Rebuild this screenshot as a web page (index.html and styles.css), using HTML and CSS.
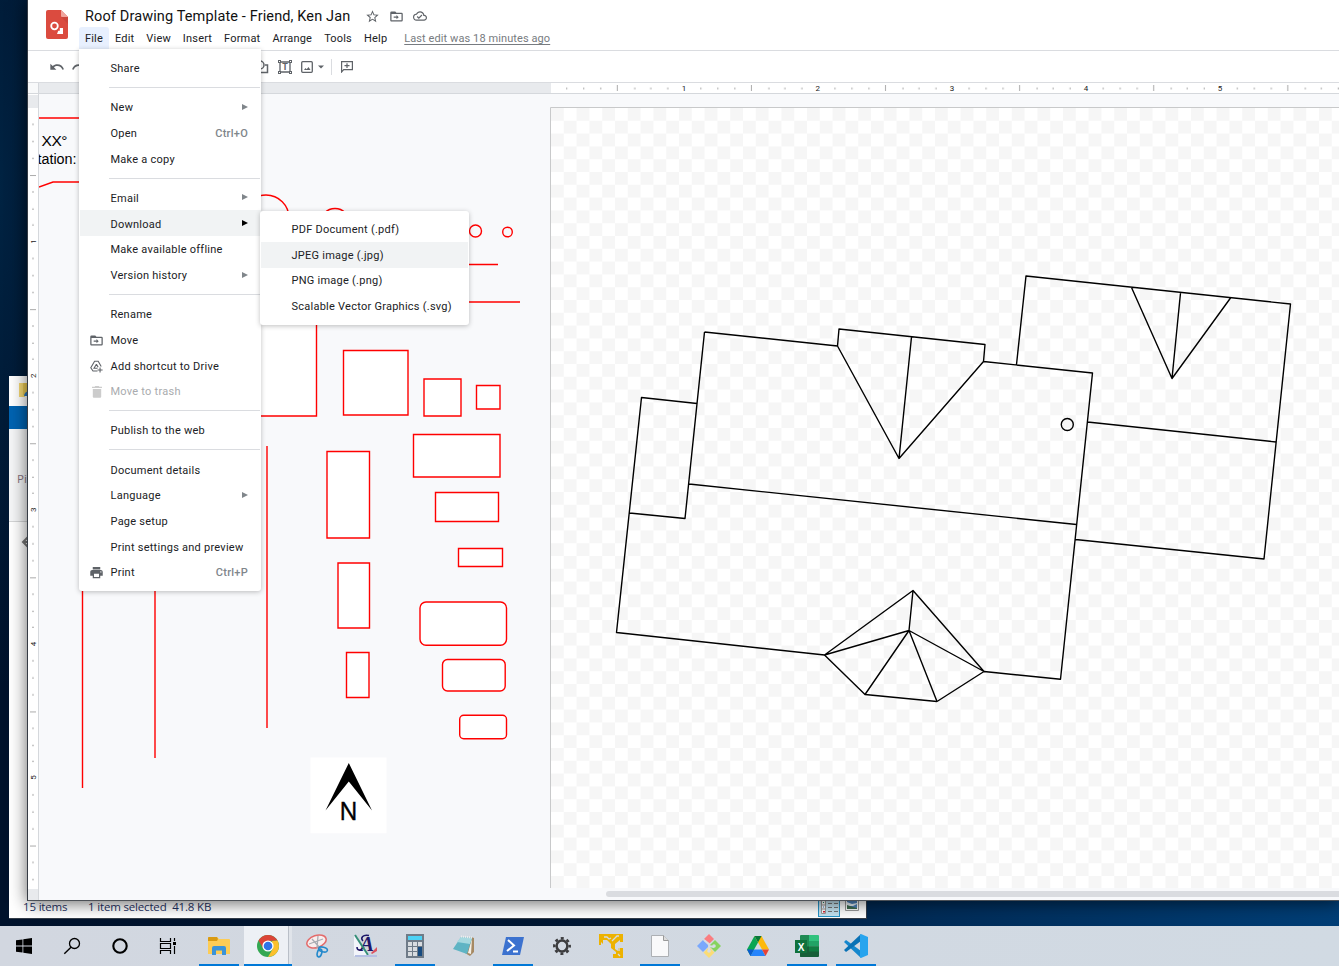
FILE: index.html
```html
<!DOCTYPE html>
<html lang="en">
<head>
<meta charset="utf-8">
<title>Roof Drawing Template - Friend, Ken Jan</title>
<link rel="stylesheet" href="styles.css">
</head>
<body>
<div class="desktop">

  <section class="explorer">
    <div class="ex-title">
      <svg width="18" height="18" viewBox="0 0 18 18"><path d="M0 1h6v14H0z" fill="#f5d873"/><path d="M4 1h14v12H4z" fill="#e9c852"/><path d="M5 14c1-5 4-5 8-5v5z" fill="#2b78c2"/></svg>
    </div>
    <div class="ex-tab"></div>
    <div class="ex-ribbon"><span>Pin</span></div>
    <div class="ex-body">
      <svg width="14" height="12" viewBox="0 0 14 12"><path d="M7 1L2 6l5 5M2 6h12" fill="none" stroke="#777" stroke-width="2"/></svg>
    </div>
    <div class="ex-status">
      <span class="ex-count">15 items</span><span class="ex-sel">1 item selected&nbsp; 41.8 KB</span>
      <div class="ex-views">
        <div class="view-on"><svg width="20" height="16" viewBox="0 0 20 16"><path d="M2.500 0v13.500h4V0M2.500 5h4M2.500 9h4" fill="#fff" stroke="#999"/><path d="M9 3.500h4M15 3.500h4M9 7.500h4M15 7.500h4M9 11.500h4M15 11.500h4" stroke="#777"/><path d="M4 2h1v1H4z" fill="#286"/><path d="M4 6.500h1v1H4z" fill="#37c"/><path d="M4 11h2v1.500H4z" fill="#d23"/></svg></div>
        <div class="view-off"><svg width="14" height="12" viewBox="0 0 14 12"><path d="M.5 0v10.500h13V0" fill="#fff" stroke="#999"/><path d="M2 1h10v8H2z" fill="#4f83bd"/><path d="M2 2l5 2 5-1v1L8 6H2z" fill="#eaf3fb"/><path d="M2 5l6 2 4 1v1H2z" fill="#3f6d50"/></svg></div>
      </div>
    </div>
  </section>

  <main class="window">
    <header class="head">
      <svg class="logo" width="22" height="30" viewBox="0 0 22 30"><path d="M2 0h13l7 7v20a2 2 0 0 1-2 2H2a2 2 0 0 1-2-2V2a2 2 0 0 1 2-2z" fill="#db4b3f"/><path d="M15 0l7 7h-6a1 1 0 0 1-1-1z" fill="#f0a59d"/><path d="M15 7h7v7z" fill="#bd4037" opacity=".5"/><circle cx="8.500" cy="16" r="3.300" fill="none" stroke="#fff" stroke-width="1.800"/><path d="M17 18v6h-6l1.200-3.200h1.600V18z" fill="#fff"/></svg>
      <div class="head-text">
        <div class="title-row">
          <h1>Roof Drawing Template - Friend, Ken Jan</h1>
          <svg class="ic" width="15" height="15" viewBox="0 0 24 24"><path d="M22 9.240l-7.190-.62L12 2 9.190 8.630 2 9.240l5.460 4.730L5.820 21 12 17.270 18.180 21l-1.630-7.030L22 9.240zM12 15.400l-3.760 2.270 1-4.280-3.320-2.880 4.380-.38L12 6.100l1.710 4.040 4.380.38-3.320 2.880 1 4.280L12 15.400z"/></svg>
          <svg class="ic" width="15" height="15" viewBox="0 0 24 24"><path d="M20 6h-8l-2-2H4a2 2 0 0 0-2 2v12c0 1.100.9 2 2 2h16a2 2 0 0 0 2-2V8a2 2 0 0 0-2-2zm0 12H4V8h16zM12 9.500V12H7.500v2H12v2.500l3.500-3.500z"/></svg>
          <svg class="ic" width="14" height="14" viewBox="0 0 24 24"><path d="M19.350 10.040A7.490 7.490 0 0 0 12 4C9.110 4 6.600 5.640 5.350 8.040A5.994 5.994 0 0 0 0 14c0 3.310 2.690 6 6 6h13c2.760 0 5-2.240 5-5 0-2.640-2.050-4.780-4.650-4.960zM19 18H6c-2.210 0-4-1.790-4-4 0-2.050 1.530-3.760 3.560-3.970l1.070-.11.5-.95A5.469 5.469 0 0 1 12 6c2.620 0 4.880 1.860 5.390 4.430l.3 1.500 1.530.11A2.980 2.980 0 0 1 22 15c0 1.650-1.350 3-3 3zm-9-3.820l-2.090-2.090L6.500 13.500 10 17l6.010-6.010-1.410-1.410z"/></svg>
        </div>
        <nav class="menubar">
          <span class="open">File</span><span>Edit</span><span>View</span><span>Insert</span><span>Format</span><span>Arrange</span><span>Tools</span><span>Help</span><a>Last edit was 18 minutes ago</a>
        </nav>
      </div>
    </header>

    <div class="toolbar">
      <svg width="16" height="16" viewBox="0 0 24 24"><path d="M12.500 8c-2.650 0-5.050.99-6.900 2.600L2 7v9h9l-3.620-3.620c1.390-1.160 3.160-1.880 5.120-1.880 3.540 0 6.550 2.310 7.600 5.500l2.370-.78C21.080 11.030 17.150 8 12.500 8z"/></svg>
      <svg width="16" height="16" viewBox="0 0 24 24"><path d="M18.400 10.600C16.550 8.990 14.150 8 11.500 8c-4.650 0-8.580 3.030-9.960 7.220L3.900 16a8 8 0 0 1 12.720-3.620L13 16h9V7z"/></svg>
      <svg class="t-shape" width="16" height="16" viewBox="0 0 16 16"><circle cx="6" cy="6" r="4" fill="none" stroke="#5f6368" stroke-width="1.500"/><path d="M11 6h2.500v7.500H6V11" fill="none" stroke="#5f6368" stroke-width="1.500"/></svg>
      <svg class="t-box" width="14" height="14" viewBox="0 0 14 14"><path d="M2 2h10v10H2z" fill="none" stroke="#5f6368" stroke-width="1.300"/><path d="M0 0h3v3H0zM11 0h3v3h-3zM0 11h3v3H0zM11 11h3v3h-3z"/><path d="M1 1h1v1H1zM12 1h1v1h-1zM1 12h1v1H1zM12 12h1v1h-1z" fill="#fff"/><text x="7" y="10.300">T</text></svg>
      <svg class="t-img" width="12" height="12" viewBox="0 0 12 12"><rect x=".7" y=".7" width="10.600" height="10.600" rx="1" fill="none" stroke="#5f6368" stroke-width="1.300"/><path d="M3 9l1.500-2 1.200 1.200L7.500 6 9.500 9z"/></svg>
      <svg class="t-caret" width="6" height="4" viewBox="0 0 6 4"><path d="M0 .5h6l-3 3z"/></svg>
      <i class="t-div"></i>
      <svg class="t-com" width="12" height="12" viewBox="0 0 12 12"><path d="M.6 11V.7h10.800v8H2.700z" fill="none" stroke="#5f6368" stroke-width="1.200"/><path d="M5.400 2.300h1.200v1.800h1.900v1.200H6.600v1.800H5.400V5.300H3.500V4.100h1.900z"/></svg>
    </div>

    <svg class="hruler" width="1311" height="11" viewBox="28 83 1311 11">
      <defs>
        <pattern id="hticks" x="550.300" y="83" width="134.100" height="10" patternUnits="userSpaceOnUse">
          <path d="M16 4.500h1v2h-1zM33 4.500h1v2h-1zM50 4.500h1v2h-1zM66.500 2h1v6h-1zM84 4.500h1v2h-1zM100 4.500h1v2h-1zM117 4.500h1v2h-1z" fill="#aaa"/>
        </pattern>
        <pattern id="vticks" x="28" y="107.500" width="10" height="134.100" patternUnits="userSpaceOnUse">
          <path d="M4 16.500h2v1H4zM4 33.500h2v1H4zM4 50.500h2v1H4zM2 67.500h6v1H2zM4 84h2v1H4zM4 101h2v1H4zM4 117h2v1H4z" fill="#aaa"/>
        </pattern>
      </defs>
      <path d="M28 83h11v11H28z" fill="#f8f9fa"/><path d="M39 83h512v10H39z" fill="#e8eaed"/>
      <path d="M551 83h788v10H551z" fill="#fff"/><path d="M551 83h788v10H551z" fill="url(#hticks)"/>
      <path d="M28 93.500h1311" stroke="#d5d8dc"/><path d="M38.500 83v11" stroke="#d5d8dc"/>
      <g class="rl"><text x="684" y="91">1</text><text x="817.800" y="91">2</text><text x="952" y="91">3</text><text x="1086" y="91">4</text><text x="1220" y="91">5</text></g>
    </svg>

    <div class="work">
      <svg class="vruler" width="11" height="806" viewBox="28 94 11 806">
        <path d="M28 94h10v806H28z" fill="#fff"/><path d="M28 95h10v13H28zM28 889h10v11H28z" fill="#e8eaed"/>
        <path d="M28 108h10v781H28z" fill="url(#vticks)"/><path d="M38.500 94v806" stroke="#d5d8dc"/>
        <g class="rl"><text transform="translate(36 241.600) rotate(-90)">1</text><text transform="translate(36 375.700) rotate(-90)">2</text><text transform="translate(36 509.800) rotate(-90)">3</text><text transform="translate(36 643.900) rotate(-90)">4</text><text transform="translate(36 777.500) rotate(-90)">5</text></g>
      </svg>
      <svg class="canvas" width="1300" height="806" viewBox="39 94 1300 806">
        <defs><pattern id="chk" x="551" y="108" width="25.600" height="25.600" patternUnits="userSpaceOnUse"><path d="M0 0h12.800v12.800H0zM12.800 12.800h12.800v12.800H12.800z" fill="#f6f6f6"/></pattern></defs>
        <path d="M551 108h788v780H551z" fill="#fff"/><path d="M551 108h788v780H551z" fill="url(#chk)"/>
        <path d="M550.500 888V107.500H1339" fill="none" stroke="#c8c9ca"/>
        <g class="note"><text x="41.500" y="146" textLength="26">XX°</text><text x="37.500" y="164" textLength="39" lengthAdjust="spacingAndGlyphs">tation:</text></g>
        <g class="red">
          <path d="M39 118H90M39 187l14-5H90M440 264.500h58M440 302h80M82.500 580v208M155 580v178M267 446v282"/>
          <circle cx="266" cy="218" r="23"/><circle cx="335" cy="223" r="14.500"/><circle cx="475.500" cy="231" r="6"/><circle cx="507.500" cy="232" r="4.800"/>
          <path d="M230 310h86.500v106H230zM343.500 350.500h64.500v64.500h-64.500zM424 379h37v37h-37zM476.500 385.500H500V409h-23.500zM413.500 434.500H500V477h-86.500zM435.500 492.500h63v29h-63zM458.500 548.500h44v18h-44zM327 451.500h42.500V538H327zM338 563h31.500v65H338zM346.500 652.500H369v45h-22.500z"/>
          <rect x="420" y="602" width="86.500" height="43.300" rx="6"/><rect x="442.500" y="659.500" width="62.700" height="31.500" rx="5"/><rect x="459.700" y="715.300" width="46.800" height="23.500" rx="4"/>
        </g>
        <path d="M310.500 757.500h76v75.700h-76z" fill="#fff"/><path d="M348.800 763L372 810.500 348.800 781.500 325.500 810.500z"/>
        <text class="north" x="339.500" y="820" textLength="18" lengthAdjust="spacingAndGlyphs">N</text>
        <g class="roof">
          <path d="M704.500 332l133 14 1.500-17 146 15.500-1.500 17 109 11.500L1060.500 679.300 984 671.500M937 701.500L865 694.500 824.500 655 616.500 632.500 641.500 397.500 697 403.500M984 671.500l-47 30M704.500 332L685 518.500 629.500 513M689 484l387.500 40.500M837.500 346L899 458.500l84.500-97M911.500 337L899 458.500M1016.500 364.500L1026 276l264.500 28L1264 559l-188.500-19.500M1087.500 422l188.500 20M1131.500 287.500L1172 378.500 1230.500 298M1180.500 293L1172 378.500"/>
          <path d="M824.500 655L913 590.500 984 671.500M913 590.500l-4 40M824.500 655l84.500-24.500 75 41M865 694.500l44-64 28 71"/>
          <circle cx="1067.300" cy="424.500" r="6"/>
        </g>
        <path d="M606 894a3 3 0 0 1 3-3H1339v6H609a3 3 0 0 1-3-3z" fill="#dadce0"/>
      </svg>
    </div>
  </main>

  <div class="menu file-menu">
    <div class="mi"><b></b>Share</div><hr>
    <div class="mi"><b></b>New<u></u></div>
    <div class="mi"><b></b>Open<em>Ctrl+O</em></div>
    <div class="mi"><b></b>Make a copy</div><hr>
    <div class="mi"><b></b>Email<u></u></div>
    <div class="mi on"><b></b>Download<u></u></div>
    <div class="mi"><b></b>Make available offline</div>
    <div class="mi"><b></b>Version history<u></u></div><hr>
    <div class="mi"><b></b>Rename</div>
    <div class="mi"><b><svg width="15" height="15" viewBox="0 0 24 24"><path d="M20 6h-8l-2-2H4a2 2 0 0 0-2 2v12c0 1.100.9 2 2 2h16a2 2 0 0 0 2-2V8a2 2 0 0 0-2-2zm0 12H4V8h16zM12 9.500V12H7.500v2H12v2.500l3.500-3.500z"/></svg></b>Move</div>
    <div class="mi"><b><svg width="13" height="13" viewBox="0 0 13 13"><path d="M7.500 11H3L.8 7.700 4.600 1.200h3.600l3 5.200M6.400 4.200L4 8.300h3.500M6.400 4.200l1.700 2.900" fill="none" stroke="#5f6368" stroke-width="1.100"/><path d="M9.500 7.500h1.100v2h2v1.100h-2v2H9.500v-2h-2V9.500h2z"/></svg></b>Add shortcut to Drive</div>
    <div class="mi off"><b><svg width="10" height="12" viewBox="0 0 10 12"><path d="M3.200 0h3.600l.5.800H10V2H0V.8h2.700zM.8 3h8.400v7.800a1 1 0 0 1-1 1H1.800a1 1 0 0 1-1-1z"/></svg></b>Move to trash</div><hr>
    <div class="mi"><b></b>Publish to the web</div><hr>
    <div class="mi"><b></b>Document details</div>
    <div class="mi"><b></b>Language<u></u></div>
    <div class="mi"><b></b>Page setup</div>
    <div class="mi"><b></b>Print settings and preview</div>
    <div class="mi"><b><svg width="15" height="15" viewBox="0 0 24 24"><path d="M19 8H5c-1.660 0-3 1.340-3 3v6h4v4h12v-4h4v-6c0-1.660-1.340-3-3-3zm-3 11H8v-5h8v5zm3-7a1 1 0 1 1 0-2 1 1 0 0 1 0 2zM18 3H6v4h12z"/></svg></b>Print<em>Ctrl+P</em></div>
  </div>
  <div class="menu sub-menu">
    <div class="mi">PDF Document (.pdf)</div>
    <div class="mi on">JPEG image (.jpg)</div>
    <div class="mi">PNG image (.png)</div>
    <div class="mi">Scalable Vector Graphics (.svg)</div>
  </div>

  <footer class="taskbar">
    <div class="sys"><svg width="16" height="16" viewBox="0 0 16 16"><path d="M0 2.300L6.500 1.400V7.600H0zM7.300 1.300L16 0v7.600H7.300zM0 8.400h6.500v6.200L0 13.700zM7.300 8.400H16V16l-8.700-1.200z"/></svg></div>
    <div class="sys"><svg width="18" height="18" viewBox="0 0 18 18"><circle cx="11.500" cy="6.500" r="5" fill="none" stroke="#000" stroke-width="1.300"/><path d="M8 10.200L1.300 16.800" stroke="#000" stroke-width="1.400"/></svg></div>
    <div class="sys"><svg width="18" height="18" viewBox="0 0 18 18"><circle cx="9" cy="9" r="6.700" fill="none" stroke="#000" stroke-width="2.100"/></svg></div>
    <div class="sys"><svg width="18" height="16" viewBox="0 0 18 16"><path d="M1.500 0v3.500h10V0M1.500 5.500h10v5h-10zM1.500 16v-3.500h10V16M15.500 0v3M15.500 8v8" fill="none" stroke="#000" stroke-width="1.200"/><path d="M14 4h3v3h-3z"/></svg></div>
    <div class="app run"><svg width="24" height="20" viewBox="0 0 24 20"><path d="M1 2a1 1 0 0 1 1-1h8l2 2h10a1 1 0 0 1 1 1v14H1z" fill="#fdcc55"/><path d="M1 5V2a1 1 0 0 1 1-1h8l1 2-1 2z" fill="#d99a12"/><path d="M5 19v-7a2 2 0 0 1 2-2h10a2 2 0 0 1 2 2v7h-4v-4.500H9V19z" fill="#3b93d8"/></svg></div>
    <div class="app run active"><svg width="22" height="22" viewBox="0 0 22 22"><circle cx="11" cy="11" r="11" fill="#34a853"/><path d="M1.500 5.500A11 11 0 0 1 20.500 5.500L11 6v5l-4.500 3z" fill="#db4437"/><path d="M20.500 5.500A11 11 0 0 1 11 22l5-8.500L15 6z" fill="#fbc02d"/><circle cx="11" cy="11" r="5.600" fill="#fff"/><circle cx="11" cy="11" r="4.300" fill="#2f74e8"/></svg></div>
    <div class="app"><svg width="24" height="24" viewBox="0 0 24 24"><ellipse cx="11.500" cy="7.500" rx="10" ry="6" transform="rotate(-18 11.500 7.500)" fill="#f8eeee" stroke="#e36b6b" stroke-width="1.500"/><path d="M7 5l8 9M13 2l-1 12M4 10l14-5" stroke="#a9acb2" stroke-width="1.300"/><ellipse cx="18" cy="15.500" rx="4.500" ry="2.300" fill="none" stroke="#2389cc" stroke-width="1.600" transform="rotate(15 18 15.500)"/><ellipse cx="14.500" cy="19" rx="2.200" ry="4" fill="none" stroke="#2389cc" stroke-width="1.600" transform="rotate(15 14.500 19)"/></svg></div>
    <div class="app"><svg class="over" width="24" height="24" viewBox="0 0 24 24"><path d="M0 1l16 21H0z" fill="#f2f4fa"/><path d="M3 13c0 4 4 4 7 0M15 1.500C9 0 6 4 9 7" fill="none" stroke="#1d1769" stroke-width="1.500"/><text x="6" y="17" class="script">A</text><path d="M1 1l13 20" stroke="#368f78" stroke-width="2"/><path d="M17 19l6-6v4l-5 3z" fill="#dc5260"/><path d="M1 22h22" stroke="#b5bfe3" stroke-width="2"/></svg></div>
    <div class="app run"><svg width="18" height="24" viewBox="0 0 18 24"><path d="M0 0h18v24H0z" fill="#6f7b88"/><path d="M2 2h14v4H2z" fill="#4cd2f5"/><path d="M2 8h4v4H2zM7 8h4v4H7zM12 8h4v4h-4zM2 13h4v4H2zM7 13h4v4H7zM2 18h4v4H2zM7 18h4v4H7z" fill="#d8dce0"/><path d="M12 13h4v9h-4z" fill="#174b80"/></svg></div>
    <div class="app"><svg width="24" height="22" viewBox="0 0 24 22"><path d="M19 2l3 1v14l-4 4-5-3z" fill="#a68963"/><path d="M20 3l-1 16-3-1z" fill="#f3f0e8"/><path d="M9 2l11 1-5 16-14-5z" fill="#5fb4c4"/><path d="M9 2l11 1-2 6L5 7z" fill="#a6d8df"/><path d="M9 1.500l11 1" stroke="#eee" stroke-width="2" stroke-dasharray="1 1"/></svg></div>
    <div class="app run"><svg width="24" height="20" viewBox="0 0 24 20"><path d="M5 1h18l-4 18H1z" fill="#3c72cf"/><path d="M7 4l6 5.500L6 15M12 15.500h5" fill="none" stroke="#fff" stroke-width="2"/></svg></div>
    <div class="app"><svg width="18" height="18" viewBox="0 0 18 18"><circle cx="9" cy="9" r="5.400" fill="none" stroke="#3c3c3e" stroke-width="2.500"/><circle cx="9" cy="9" r="7.700" fill="none" stroke="#3c3c3e" stroke-width="2.500" stroke-dasharray="3 3.050" stroke-dashoffset="1.500"/></svg></div>
    <div class="app"><svg width="24" height="24" viewBox="0 0 24 24"><path d="M0 0h24v8h-3V6l-5 4v5l3 2v-3h5v10H14v-4h3v-2l-5-4V10L8 6H4v4L2 8v3H0z" fill="#edb200"/><path d="M5 3h3l2 2 2-1M16 4l2-2h2M13 7l4-4M19 20l2 2M20 14v3" fill="none" stroke="#d5dbe2" stroke-width="1.300"/></svg></div>
    <div class="app run"><svg width="18" height="22" viewBox="0 0 18 22"><path d="M.5.500h12l5 5v16H.5z" fill="#f9f9fa" stroke="#adb0b4"/><path d="M12.500.500v5h5" fill="#ddd" stroke="#999"/></svg></div>
    <div class="app"><svg width="24" height="24" viewBox="0 0 24 24"><path d="M12 0l5 5-5 5-5-5z" fill="#fa7d80"/><path d="M6 6l6 6-6 6-6-6z" fill="#7aa8fc"/><path d="M18 6l6 6-6 6-6-6z" fill="#87d35f"/><path d="M12 13l5.500 5.500L12 24l-5.500-5.500z" fill="#fbdc75"/><path d="M7 6l5 4v8M12 12l5 1" fill="none" stroke="#d7dde3" stroke-width="1.800"/><circle cx="12" cy="17" r="1.800" fill="#d7dde3"/><circle cx="17" cy="12" r="1.800" fill="#d7dde3"/></svg></div>
    <div class="app"><svg width="22" height="20" viewBox="0 0 22 20"><path d="M7.500 0L0 13.500 3.500 20 11 6.500z" fill="#08a652"/><path d="M7.500 0h7L22 13.500h-7z" fill="#fdb90b"/><path d="M7.500 0h7L11 6.500z" fill="#08783b"/><path d="M3.500 20L7 13.500h8L18.500 20z" fill="#2684fc"/><path d="M0 13.500h7L3.500 20z" fill="#0b5bd0"/><path d="M15 13.500h7L18.500 20z" fill="#e94335"/></svg></div>
    <div class="app run"><svg width="24" height="22" viewBox="0 0 24 22"><path d="M5 1a1 1 0 0 1 1-1h8v22H6a1 1 0 0 1-1-1z" fill="#1f8a54"/><path d="M14 0h9a1 1 0 0 1 1 1v5H14z" fill="#31c27e"/><path d="M14 6h10v5.500H14z" fill="#22a366"/><path d="M5 11.500h19V21a1 1 0 0 1-1 1H6a1 1 0 0 1-1-1z" fill="#175f38"/><path d="M14 11.500h10v5H14z" fill="#107c41"/><path d="M0 5h12v13H0z" fill="#10713c"/><text x="6" y="15.500" class="xl">X</text></svg></div>
    <div class="app run"><svg width="24" height="24" viewBox="0 0 24 24"><path d="M0 8l2-2 15 11v7z" fill="#1587cd"/><path d="M0 16l2 2L17 7V0z" fill="#0a72b5"/><path d="M17 0l7 3v18l-7 3-1-1V1z" fill="#27a4ee"/></svg></div>
  </footer>
</div>
</body>
</html>
```
FILE: styles.css
```css
* { box-sizing: border-box; }
body { margin: 0; font-family: Roboto, "Liberation Sans", sans-serif; overflow: hidden; }
svg { display: block; flex: none; }
.desktop { position: relative; width: 1339px; height: 966px; overflow: hidden; background: radial-gradient(ellipse 70px 500px at 0 190px, rgba(0,42,76,.7), transparent), linear-gradient(90deg, #00122b 0, #001733 45%, #002c58 70%, #003e76 100%); }

.explorer { position: absolute; left: 9px; top: 376px; width: 858px; height: 543px; display: flex; flex-direction: column; background: #fff; border-right: 1px solid #333c48; border-bottom: 1px solid #333c48; }
.ex-title { height: 30px; padding: 6px 0 0 10px; }
.ex-tab { height: 23px; background: #0063b1; }
.ex-ribbon { height: 93px; padding: 43px 0 0 8px; background: #f5f6f7; border-bottom: 1px solid #d4d5d6; font: 11.500px/14px "Open Sans", sans-serif; color: #86737d; }
.ex-body { flex: 1; padding: 14px 0 0 12px; }
.ex-status { height: 24px; display: flex; align-items: center; font: 11.500px/20px "Open Sans", sans-serif; letter-spacing: -.17px; color: #1e3162; padding-left: 14px; }
.ex-count, .ex-sel { padding-top: 2px; }
.ex-count { width: 65px; }
.ex-sel { flex: 1; }
.ex-views { display: flex; width: 48px; height: 24px; align-items: flex-start; gap: 5px; }
.view-on { width: 22px; height: 23px; padding-top: 6px; background: #c4e3f1; border: 1px solid #2694c8; border-top: 0; }
.view-off { padding-top: 6px; }

.window { position: absolute; left: 27px; top: 0; width: 1313px; height: 901px; display: flex; flex-direction: column; background: #fff; border-left: 1px solid #353b44; border-bottom: 1px solid #4c5056; box-shadow: 0 2px 16px rgba(0,0,0,.6); }
.head { height: 51px; flex: none; display: flex; border-bottom: 1px solid #dadce0; padding-left: 18px; }
.logo { margin-top: 10px; }
.head-text { margin-left: 11px; }
.title-row { height: 27px; display: flex; align-items: center; padding: 5px 0 0 6px; }
h1 { margin: 0 15px 0 0; padding-top: 2px; width: 265px; font-weight: 400; font-size: 14.500px; line-height: 20px; color: #111; white-space: nowrap; letter-spacing: .13px; }
.title-row .ic { margin-right: 9px; }
.ic, .toolbar svg, .mi svg { fill: #5f6368; }
.menubar { display: flex; height: 23px; font-size: 11px; line-height: 23px; letter-spacing: .18px; color: #202124; white-space: nowrap; }
.menubar span { padding: 0 6px; }
.menubar .open { background: #e8f0fe; border-radius: 3px 3px 0 0; }
.menubar a { margin-left: 11px; letter-spacing: .09px; color: #777b80; text-decoration: underline; text-underline-offset: 2px; }
.toolbar { height: 32px; flex: none; display: flex; align-items: center; padding-left: 21px; border-bottom: 1px solid #dadce0; }
.toolbar svg:nth-child(2) { margin-left: 6px; }
.toolbar .t-shape { margin-left: 167px; }
.toolbar .t-box { margin-left: 8px; margin-right: 9px; }
.t-box text { font: bold 9px Roboto, sans-serif; text-anchor: middle; }
.toolbar .t-caret { margin-left: 5px; }
.t-div { width: 1px; height: 16px; margin: 0 9px 0 7px; background: #dadce0; }
.hruler { flex: none; }
.rl { font: 8px Roboto, sans-serif; fill: #222; text-anchor: middle; }
.work { display: flex; height: 806px; background: #f8f9fb; }
.note { font: 15.500px "Liberation Sans", sans-serif; fill: #000; }
.red { fill: none; stroke: #f00; stroke-width: 1.400; }
.red rect, .red circle ~ path { fill: #fff; }
.roof { fill: none; stroke: #000; stroke-width: 1.400; stroke-linejoin: round; }
.north { font: 25px "Open Sans", sans-serif; stroke: #000; stroke-width: .5; }

.menu { position: absolute; background: #fff; padding: 6px 0; border-radius: 0 0 3px 3px; box-shadow: 0 1px 5px rgba(0,0,0,.25); font-size: 11px; letter-spacing: .25px; color: #202124; }
.file-menu { left: 79px; top: 49px; width: 182px; height: 542px; }
.sub-menu { left: 260px; top: 211px; width: 209px; height: 114px; padding: 5.500px 1px; border-radius: 3px; }
.mi { display: flex; align-items: center; height: 25.700px; white-space: nowrap; padding-right: 13px; }
.file-menu .mi { margin-left: 1px; padding-top: 1.800px; }
.sub-menu .mi { padding-left: 30.500px; }
.mi b { width: 30.500px; padding-left: 3px; display: flex; justify-content: center; flex: none; }
.mi u { margin: -2px 0 0 auto; border-left: 6px solid #80868b; border-top: 3px solid transparent; border-bottom: 3px solid transparent; }
.mi em { margin-left: auto; font-style: normal; font-weight: 500; color: #80868b; }
.mi.on { background: #f1f3f4; }
.mi.on u { border-left-color: #000; }
.mi.off { color: #a9abae; }
.mi.off svg { fill: #ccc; }
.menu hr { height: 1px; border: 0; margin: 6.250px 1px 6.250px 30px; background: #dadce0; }

.taskbar { position: absolute; left: 0; top: 926px; width: 1339px; height: 40px; display: flex; background: linear-gradient(90deg, #d2d7e0, #d1dae3); }
.sys { width: 48px; display: flex; align-items: center; justify-content: center; }
.sys:nth-child(4) { margin-right: 2px; }
.app { width: 49px; display: flex; align-items: center; justify-content: center; }
.app.run { background: linear-gradient(#0078d7, #0078d7) center bottom / 40px 2px no-repeat; }
.app.run.active { background: linear-gradient(#0078d7, #0078d7) bottom / 100% 2px no-repeat, linear-gradient(90deg, #edf0f5 44px, #b9bfc8 44px, #b9bfc8 45px, #e0e4ea 45px); margin: 0 0 0 1px; width: 48px; }
.over { overflow: visible; }
.script { font: italic bold 21px "Liberation Serif", serif; fill: #1d1769; }
.xl { font: bold 10px "Liberation Sans", sans-serif; fill: #fff; text-anchor: middle; }
```
